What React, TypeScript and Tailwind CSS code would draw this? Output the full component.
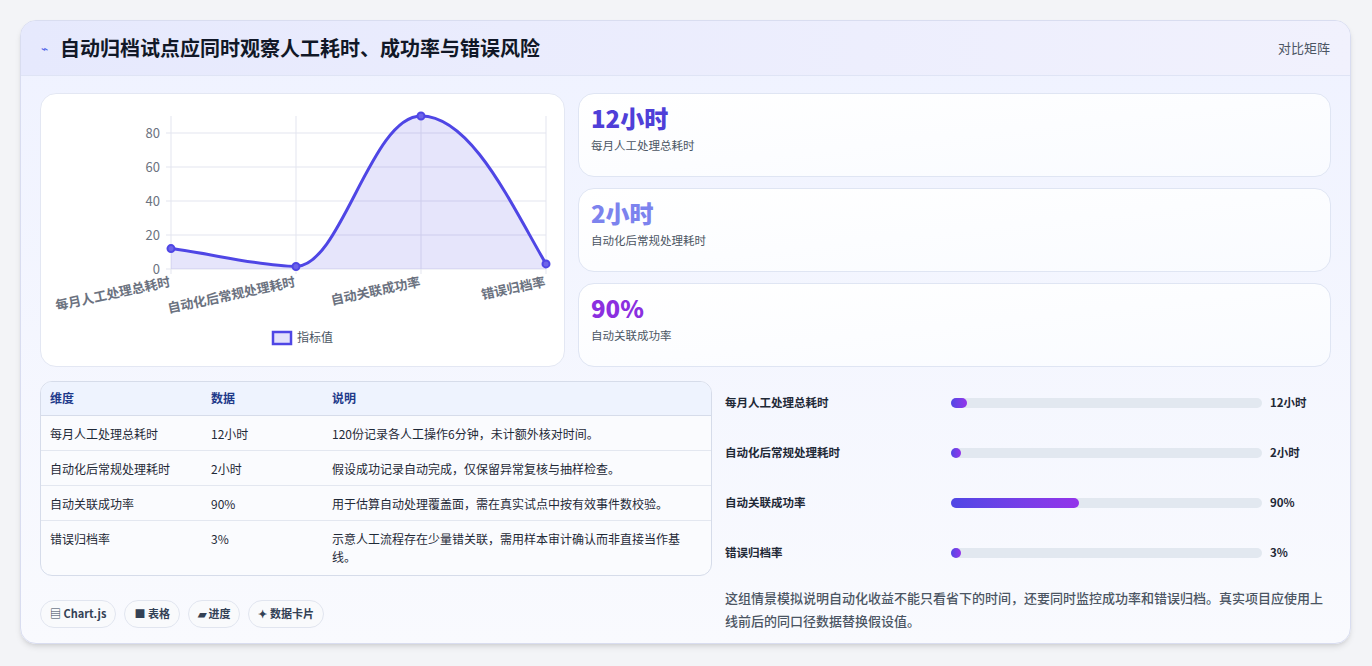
const font = { fontFamily: '"Noto Sans CJK SC", "Noto Sans", sans-serif' };

const stats = [
  { value: "12小时", label: "每月人工处理总耗时", color: "text-[#4f3fd8]" },
  { value: "2小时", label: "自动化后常规处理耗时", color: "text-[#7c83ee]" },
  { value: "90%", label: "自动关联成功率", color: "text-[#8b2fe0]" },
];

const rows = [
  ["每月人工处理总耗时", "12小时", "120份记录各人工操作6分钟，未计额外核对时间。"],
  ["自动化后常规处理耗时", "2小时", "假设成功记录自动完成，仅保留异常复核与抽样检查。"],
  ["自动关联成功率", "90%", "用于估算自动处理覆盖面，需在真实试点中按有效事件数校验。"],
  ["错误归档率", "3%", "示意人工流程存在少量错关联，需用样本审计确认而非直接当作基线。"],
];

const bars = [
  { label: "每月人工处理总耗时", value: "12小时", pct: 5 },
  { label: "自动化后常规处理耗时", value: "2小时", pct: 2 },
  { label: "自动关联成功率", value: "90%", pct: 41 },
  { label: "错误归档率", value: "3%", pct: 2 },
];

function Chart() {
  const xs = [130, 255, 380, 505];
  const vals = [12, 1.5, 90, 3];
  const y = (v: number) => 175 - v * 1.7;
  const p = xs.map((x, i) => [x, y(vals[i])]);
  const d = `M${p[0][0]},${p[0][1]} C170,${p[0][1] + 5} 220,${p[1][1]} ${p[1][0]},${p[1][1]} C300,${p[1][1]} 330,${p[2][1]} ${p[2][0]},${p[2][1]} C430,${p[2][1]} 470,110 ${p[3][0]},${p[3][1]}`;
  const labels = ["每月人工处理总耗时", "自动化后常规处理耗时", "自动关联成功率", "错误归档率"];
  return (
    <svg width="524" height="273" className="block">
      {[0, 20, 40, 60, 80].map((v) => (
        <g key={v}>
          <line x1="125" x2="505" y1={y(v)} y2={y(v)} stroke="#e3e5ef" />
          <text x="119" y={y(v) + 5} textAnchor="end" fontSize="13" fill="#6b7280" style={font}>{v}</text>
        </g>
      ))}
      {xs.map((x) => (
        <line key={x} x1={x} x2={x} y1="22" y2="180" stroke="#e3e5ef" />
      ))}
      <path d={`${d} L505,175 L130,175 Z`} fill="#4f46e5" fillOpacity="0.14" />
      <path d={d} fill="none" stroke="#4f46e5" strokeWidth="3" />
      {p.map(([px, py], i) => (
        <circle key={i} cx={px} cy={py} r="3.5" fill="#6d64e8" stroke="#4f46e5" strokeWidth="2" />
      ))}
      {labels.map((l, i) => (
        <text key={l} x={xs[i]} y="192" textAnchor="end" fontSize="13" fontWeight="600" fill="#6b7280" transform={`rotate(-12 ${xs[i]} 192)`} style={font}>{l}</text>
      ))}
      <rect x="232" y="238" width="18" height="12" fill="#e3e1fb" stroke="#4f46e5" strokeWidth="2.5" />
      <text x="256" y="248" fontSize="12" fill="#4b5563" style={font}>指标值</text>
    </svg>
  );
}

export default function App() {
  return (
    <div className="w-[1372px] h-[666px] bg-[#f3f4f7] pt-5 pl-5" style={font}>
      <div className="w-[1331px] h-[624px] rounded-2xl border border-[#d9ddf0] bg-gradient-to-b from-[#eff2ff] to-[#f9fafe] overflow-hidden shadow-md">
        <div className="h-[55px] flex items-center justify-between px-5 border-b border-[#dfe4f5] bg-gradient-to-r from-[#e6e9fd] to-[#f1f1fd]">
          <div className="flex items-center gap-3">
            <span className="text-[#4f63e8] text-xs">⌁</span>
            <h1 className="text-[20px] font-bold text-[#111827]">自动归档试点应同时观察人工耗时、成功率与错误风险</h1>
          </div>
          <span className="text-[13px] text-[#4b5563]">对比矩阵</span>
        </div>
        <div className="px-[19px] pt-[17px]">
          <div className="flex gap-[13px]">
            <div className="w-[525px] h-[274px] rounded-2xl border border-[#e3e7f3] bg-white">
              <Chart />
            </div>
            <div className="w-[755px] flex flex-col gap-[11px]">
              {stats.map((s) => (
                <div key={s.label} className="h-[84px] rounded-2xl border border-[#dfe5f3] bg-gradient-to-br from-white to-[#f9fbff] px-[12px] pt-[8px]">
                  <div className={`text-[24px] font-extrabold leading-[32px] ${s.color}`}>{s.value}</div>
                  <div className="text-[11.5px] text-[#4b5563] mt-[3px]">{s.label}</div>
                </div>
              ))}
            </div>
          </div>
          <div className="flex gap-[13px] mt-[14px]">
            <div className="w-[672px]">
              <div className="rounded-xl border border-[#d6dcea] overflow-hidden bg-[#fafbfe]">
                <table className="w-full text-[12px] text-[#1f2937]">
                  <thead>
                    <tr className="bg-[#eef3fe] text-[#1e3a8a] h-[33px] border-b border-[#d6dcea]">
                      <th className="text-left font-semibold pl-[9px] w-[170px]">维度</th>
                      <th className="text-left font-semibold w-[121px]">数据</th>
                      <th className="text-left font-semibold">说明</th>
                    </tr>
                  </thead>
                  <tbody>
                    {rows.map((r, i) => (
                      <tr key={i} className={i < 3 ? "h-[35px] border-b border-[#e3e7f0]" : ""}>
                        <td className="pl-[9px] align-top pt-[9px]">{r[0]}</td>
                        <td className="align-top pt-[9px]">{r[1]}</td>
                        <td className={`pr-6 align-top pt-[9px] leading-[18px] ${i === 3 ? "pb-[9px]" : ""}`}>{r[2]}</td>
                      </tr>
                    ))}
                  </tbody>
                </table>
              </div>
              <div className="flex gap-2 mt-[24px]">
                {["▤ Chart.js", "■ 表格", "▰ 进度", "✦ 数据卡片"].map((t) => (
                  <span key={t} className="h-[28px] px-[9px] flex items-center rounded-full border border-[#e1e5ef] bg-[#f9fafc] text-[11px] font-semibold text-[#334155]">{t}</span>
                ))}
              </div>
            </div>
            <div className="flex-1">
              {bars.map((b) => (
                <div key={b.label} className="h-[50px] -mt-[3px] mb-[3px] flex items-center text-[11.5px] font-semibold text-[#1f2937]">
                  <span className="w-[226px]">{b.label}</span>
                  <div className="w-[311px] h-[10px] rounded-full bg-[#e2e8f0]">
                    <div className="h-full rounded-full bg-gradient-to-r from-[#4f46e5] to-[#9333ea] min-w-[10px]" style={{ width: `${b.pct}%` }} />
                  </div>
                  <span className="ml-2">{b.value}</span>
                </div>
              ))}
              <p className="mt-[8px] text-[13px] leading-[23px] text-[#4b5563] font-medium">这组情景模拟说明自动化收益不能只看省下的时间，还要同时监控成功率和错误归档。真实项目应使用上线前后的同口径数据替换假设值。</p>
            </div>
          </div>
        </div>
      </div>
    </div>
  );
}
